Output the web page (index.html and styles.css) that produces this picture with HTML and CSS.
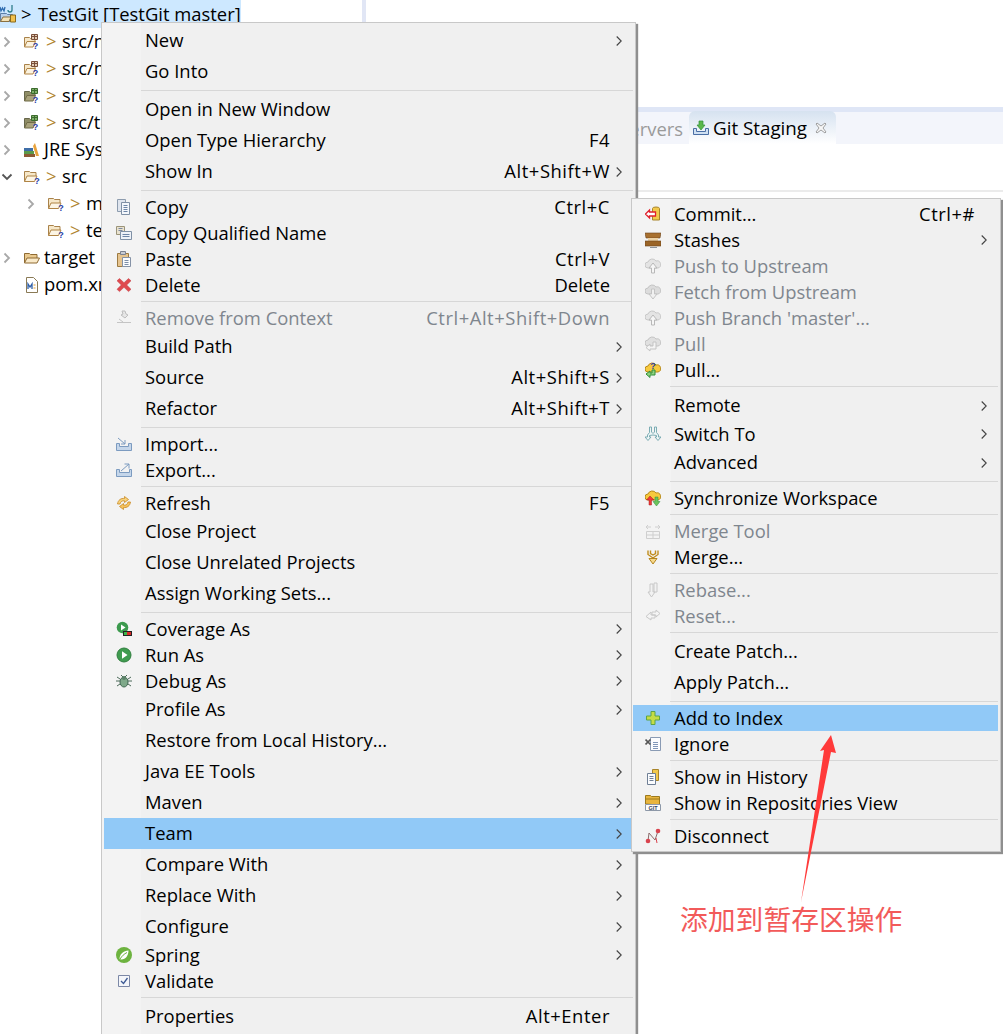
FILE: index.html
```html
<!DOCTYPE html>
<html lang="en">
<head>
<meta charset="utf-8">
<title>Eclipse Team menu</title>
<link rel="stylesheet" href="styles.css">
</head>
<body>
<svg class="sprite" width="0" height="0" aria-hidden="true">
  <defs>
    <symbol id="chev" viewBox="0 0 6 10"><path d="M.7.5 5.2 5 .7 9.5" fill="none" stroke="#444" stroke-width="1.1"/></symbol>
    <symbol id="tw-r" viewBox="0 0 8 12"><path d="M1.500 1.500 6 6l-4.500 4.500" fill="none" stroke="#a8a8a8" stroke-width="1.800"/></symbol>
    <symbol id="tw-d" viewBox="0 0 12 8"><path d="M1.500 1.500 6 6l4.500-4.500" fill="none" stroke="#555" stroke-width="1.800"/></symbol>

    <symbol id="pkgfolder" viewBox="0 0 16 16"><path d="M.5 13V3.500h5l1 1H11V8" fill="#f6e7c8" stroke="#a9824a"/><path d="M.5 13 3 7.500h8.500L9 13z" fill="#fbf3e0" stroke="#b08445"/><path d="M7.500.5h6v5h-6z" fill="#e2cdb4" stroke="#7a4f3a"/><path d="M7.500 2.500h6M10.500.5v5" stroke="#7a4f3a"/><text x="11.500" y="14.500" class="q">?</text></symbol>
    <symbol id="pkgfolder-g" viewBox="0 0 16 16"><path d="M.5 13V3.500h5l1 1H11V8" fill="#8f8d66" stroke="#66664a"/><path d="M.5 13 3 7.500h8.500L9 13z" fill="#a9a37c" stroke="#6f6a46"/><path d="M7.500.5h6v5h-6z" fill="#7fb069" stroke="#3c6b2e"/><path d="M7.500 2.500h6M10.500.5v5" stroke="#3c6b2e"/><text x="11.500" y="14.500" class="q">?</text></symbol>
    <symbol id="qfolder" viewBox="0 0 16 16"><path d="M.5 12.500v-10h5l1 1H12V7" fill="#f6e7c8" stroke="#a9824a"/><path d="M.5 12.500 3 7h10l-2.500 5.500z" fill="#fcf5e4" stroke="#b08445"/><text x="13" y="14.500" class="q">?</text></symbol>
    <symbol id="folder" viewBox="0 0 16 16"><path d="M.5 13V3.500h5l1 1H13V8" fill="#e9c98f" stroke="#8f6b33"/><path d="M.5 13 3 8h12.500L13 13z" fill="#f9e9c8" stroke="#8f6b33"/></symbol>
    <symbol id="libs" viewBox="0 0 16 16"><path d="M11 1l4 13h-3L9 4z" fill="#e8a33d"/><path d="M0 6h9v3H0z" fill="#3f6ea8"/><path d="M0 9h10v3H0z" fill="#5b9a4a"/><path d="M0 12h11v3H0z" fill="#8c5a34"/></symbol>
    <symbol id="xmlfile" viewBox="0 0 16 16"><path d="M2.500.5h7l4 4v11h-11z" fill="#fff" stroke="#8a7a55"/><path d="M4 12V7l2 3 2-3v5" fill="none" stroke="#2f5fa8" stroke-width="1.300"/><path d="M9.500 8h2M9.500 11h2" stroke="#e0a030"/></symbol>
    <symbol id="project" viewBox="0 0 17 18"><path d="M.5 8.500h6l1 1h5v7H.5z" fill="#b9d0ea" stroke="#5c7fa8"/><path d="M.5 16.500 3 12h8l-2 4.500z" fill="#f3e2b6" stroke="#8a7040"/><path d="M0 2l1 4 1.500-3L4 6l1-4" fill="none" stroke="#2e6cb0" stroke-width="1.300"/><path d="M12 0v5a2 2 0 0 1-4 0" fill="none" stroke="#2e7d8c" stroke-width="1.300"/><path d="M10.500 10h5v7h-5z" fill="#f2c14e" stroke="#8a6a1c"/></symbol>

    <symbol id="copy" viewBox="0 0 16 16"><path d="M1.500.5h8v12h-8z" fill="#dfe5ee" stroke="#8d9cae"/><path d="M5.500 3.500h8v12h-8z" fill="#f4f7fb" stroke="#7f90a5"/><path d="M7.500 6.500h4M7.500 8.500h4M7.500 10.500h4M7.500 12.500h4" stroke="#6d85a6"/></symbol>
    <symbol id="copyq" viewBox="0 0 16 16"><path d="M.5 1.500h8v8h-8z" fill="#e9e2cf" stroke="#9b9479"/><path d="M2.500 3.500h4M2.500 5.500h4" stroke="#7d8aa0"/><path d="M4.500 6.500h11v8h-11z" fill="#eef2f8" stroke="#7f90a5"/><path d="M6.500 9.500h7M6.500 11.500h7" stroke="#6d85a6"/></symbol>
    <symbol id="paste" viewBox="0 0 16 16"><path d="M1.500 2.500h11v13h-11z" fill="#e6c48f" stroke="#9c7a42"/><path d="M4.500.5h5v3h-5z" fill="#c8ccd4" stroke="#7d8290"/><path d="M6.500 6.500h8v9h-8z" fill="#fbfcfe" stroke="#8592a6"/><path d="M8.500 9.500h4M8.500 11.500h4M8.500 13.500h4" stroke="#7d8fa8"/></symbol>
    <symbol id="del" viewBox="0 0 16 16"><path d="M3.500 1.500 8 5.700l4.500-4.200 2.500 2.300L10.700 8l4.300 4.300-2.500 2.300L8 10.300l-4.500 4.300L1 12.300 5.300 8 1 3.800z" fill="#df4a4f" stroke="#c03a40" stroke-width=".5"/></symbol>
    <symbol id="remove" viewBox="0 0 16 16"><path d="M6 1h3l1 3 2 1-3 3-4-3 2-1z" fill="#e6e6e6" stroke="#bdbdbd"/><path d="M1 12.500h14" stroke="#c4c4c4"/><path d="M3 9l4 3" stroke="#c4c4c4"/></symbol>
    <symbol id="import" viewBox="0 0 16 16"><path d="M.5 7.500v7h15v-7h-3v3h-9v-3z" fill="#c5d6ea" stroke="#7c9bc0"/><path d="M2 2l7 6M9 4v4H5" fill="none" stroke="#7c9bc0"/></symbol>
    <symbol id="export" viewBox="0 0 16 16"><path d="M.5 7.500v7h15v-7h-2v3h-10v-3z" fill="#c5d6ea" stroke="#7c9bc0"/><path d="M5 9l8-7M8.500 2H13v4.500" fill="none" stroke="#7c9bc0"/></symbol>
    <symbol id="refresh" viewBox="0 0 16 16"><path d="M1.500 9C2 5 5 3 8.500 3.500V1.500l4 3-4 3V5.800C6 5.500 4.500 6.800 4 9z" fill="#f8d27a" stroke="#c98a24" stroke-width=".8"/><path d="M14.500 7c-.5 4-3.500 6-7 5.500v2l-4-3 4-3v1.700c2.500.3 4-1 4.500-3.200z" fill="#f6c35e" stroke="#c98a24" stroke-width=".8"/></symbol>
    <symbol id="coverage" viewBox="0 0 16 16"><circle cx="6.500" cy="6.500" r="5.800" fill="#3c9a4e"/><path d="M5 3.500 9.500 6.500 5 9.500z" fill="#fff"/><path d="M7 10h9v5H7z" fill="#222"/><path d="M11 11h4v3h-4z" fill="#d92a2a"/><path d="M8 11h3v3H8z" fill="#39b54a"/></symbol>
    <symbol id="run" viewBox="0 0 16 16"><circle cx="8" cy="8" r="7" fill="#3f9b4f" stroke="#2f7f3e"/><path d="M6 4.200 11.500 8 6 11.800z" fill="#fff"/></symbol>
    <symbol id="debug" viewBox="0 0 16 16"><path d="M1 4l3 2M15 4l-3 2M0 8h4M16 8h-4M1 13l3-2M15 13l-3-2M5 2l2 2M11 2L9 4" stroke="#4d6b5a" fill="none"/><ellipse cx="8" cy="9" rx="4" ry="5" fill="#7fa98a" stroke="#3f6650"/><circle cx="8" cy="5" r="2" fill="#5b8268"/></symbol>
    <symbol id="spring" viewBox="0 0 16 16"><circle cx="8" cy="8" r="8" fill="#6db33f"/><path d="M3.500 12c0-5 4-8 9-8.500 0 5-3 9-7 9-1 0-1.500-.2-2-.5z" fill="#fff"/><path d="M4 12c2-3 4-5 7-6.500" stroke="#6db33f" fill="none"/></symbol>
    <symbol id="check" viewBox="0 0 16 16"><path d="M2.500 2.500h11v11h-11z" fill="#f4f6fa" stroke="#7c88a6"/><path d="M5 8l2.500 2.500L11.500 5" fill="none" stroke="#3d5a94" stroke-width="1.300"/></symbol>

    <symbol id="commit" viewBox="0 0 16 16"><path d="M7.500 2.500a3.500 1.500 0 0 1 7 0V14h-7z" fill="#f2c94c" stroke="#a8842a"/><path d="M.5 8l4-4v2h6v4h-6v2z" fill="#fff" stroke="#e0202c" stroke-width="1.300"/></symbol>
    <symbol id="stash" viewBox="0 0 16 16"><path d="M0 1h16l-1 5H1z" fill="#a8702f" stroke="#6b451c" stroke-width=".6"/><path d="M3 6h10v3H3z" fill="#ecd2a6"/><path d="M0 9h16v5H0z" fill="#9a6427" stroke="#6b451c" stroke-width=".6"/><path d="M5 15.500h7" stroke="#8d949c"/></symbol>
    <symbol id="cloud-up" viewBox="0 0 16 16"><path d="M3 10a3 3 0 0 1 0-6 4.500 4.500 0 0 1 8-1 3.500 3.500 0 0 1 2 7z" fill="#e4e4e4" stroke="#c8c8c8"/><path d="M8 5l4 5h-2.500v5h-3v-5H4z" fill="#f6f6f6" stroke="#b8b8b8"/></symbol>
    <symbol id="cloud-down" viewBox="0 0 16 16"><path d="M3 10a3 3 0 0 1 0-6 4.500 4.500 0 0 1 8-1 3.500 3.500 0 0 1 2 7z" fill="#dcdcdc" stroke="#c4c4c4"/><path d="M8 15l-4-5h2.500V5h3v5H12z" fill="#f0f0f0" stroke="#c4c4c4"/></symbol>
    <symbol id="cloud-pull" viewBox="0 0 16 16"><path d="M3 10a3 3 0 0 1 0-6 4.500 4.500 0 0 1 8-1 3.500 3.500 0 0 1 2 7z" fill="#e0e0e0" stroke="#c4c4c4"/><path d="M8 6v4H5V8L1 11.500 5 15v-2h6V6z" fill="#f4f4f4" stroke="#c4c4c4"/></symbol>
    <symbol id="pull" viewBox="0 0 16 16"><path d="M3 10a3 3 0 0 1 0-6 4.500 4.500 0 0 1 8-1 3.500 3.500 0 0 1 2 7z" fill="#f7c93e" stroke="#b88a1a"/><path d="M7 8v3H5V9L1 12l4 3.500V13h5V8z" fill="#8fd07e" stroke="#2f8f3a"/><text x="8" y="7" class="q">?</text></symbol>
    <symbol id="switch" viewBox="0 0 16 16"><path d="M4.500 1h2v5l1.500 1.500L9.500 6V1h2v5.500l2 2.500v2H16l-3 3.500-3-3.500h1.500V9.500L8 9l-3.500.5V11H6l-3 3.500L0 11h2.500V9l2-2.500z" fill="#edf5f6" stroke="#6fa5ad" stroke-width=".9"/></symbol>
    <symbol id="sync" viewBox="0 0 16 16"><path d="M3 10a3 3 0 0 1 0-6 4.500 4.500 0 0 1 8-1 3.500 3.500 0 0 1 2 7z" fill="#f7c93e" stroke="#b88a1a"/><path d="M5 6L1.500 10H4v5h2.500v-5H9z" fill="#ef3a3a" stroke="#a81e1e" stroke-width=".5"/><path d="M11.500 16 15 11.500h-2V7h-3v4.500H8z" fill="#6cc35c" stroke="#2f8f3a" stroke-width=".5"/></symbol>
    <symbol id="mergetool" viewBox="0 0 16 16"><path d="M1.500 8.500h13v7h-13zM8 8.500v7M1.500 12h13" fill="#f3f3f3" stroke="#cfcfcf"/><path d="M2 4h4M1 4l2-2M1 4l2 2M14 4h-4M15 4l-2-2M15 4l-2 2" fill="none" stroke="#cfcfcf"/></symbol>
    <symbol id="merge" viewBox="0 0 16 16"><path d="M3 1.500v4L8 9l5-3.500v-4M5.500 1.500v3L8 6l2.500-1.500v-3" fill="none" stroke="#c08d1e" stroke-width="1.400"/><path d="M4 9.500h8l-4 5.500z" fill="#f6d88a" stroke="#b5851e"/></symbol>
    <symbol id="rebase" viewBox="0 0 16 16"><path d="M9 1v9h3V1zM5 2v8H3l3.500 5L10 10H8V2z" fill="#f2f2f2" stroke="#c8c8c8"/></symbol>
    <symbol id="reset" viewBox="0 0 16 16"><path d="M6 4 1 8.500 6 12v-2h4V7H6zM11 2v2H7v3h4v2l4-3.500z" fill="#f4f4f4" stroke="#c8c8c8"/></symbol>
    <symbol id="add" viewBox="0 0 16 16"><path d="M6 1.500h4V6h4.500v4H10v4.500H6V10H1.500V6H6z" fill="#c5dc46" stroke="#5fa445"/></symbol>
    <symbol id="ignore" viewBox="0 0 16 16"><path d="M5.500 1.500h10v13h-10z" fill="#fbfcfe" stroke="#8a9bb4"/><path d="M8 6.500h5M8 8.500h5M8 10.500h5M8 12.500h5" stroke="#7f95b8"/><path d="M.5 3.500l5 5M5.500 3.500l-5 5" stroke="#555" stroke-width="1.700"/></symbol>
    <symbol id="history" viewBox="0 0 16 16"><path d="M7.500.5h6v11h-6z" fill="#f2c94c" stroke="#a8842a"/><path d="M2.500 4.500h8v11h-8z" fill="#fbfcfe" stroke="#6f7f95"/><path d="M4.500 7.500h4M4.500 9.500h4M4.500 11.500h4" stroke="#6f7f95"/></symbol>
    <symbol id="repos" viewBox="0 0 16 16"><path d="M.5 9V.5h5l1 1h8V10z" fill="#e8b53e" stroke="#9c7a1e"/><path d="M1 4h14" stroke="#9c7a1e"/><path d="M.5 9.500h15v6H.5z" fill="#fdfdfd" stroke="#8d98a8"/><text x="8" y="14.500" class="git">GIT</text></symbol>
    <symbol id="disconnect" viewBox="0 0 16 16"><path d="M3 13l1-8 6 7 3-9" fill="none" stroke="#8c6a6a"/><circle cx="3" cy="13" r="2.300" fill="#d9434e"/><circle cx="13" cy="3" r="2.300" fill="#d9434e"/><path d="M12 15l-1-5" stroke="#d9434e"/></symbol>
    <symbol id="staging" viewBox="0 0 16 16"><path d="M.5 8.500v6h15v-6h-3v3h-9v-3z" fill="#cfe0f2" stroke="#4a6fa5"/><path d="M6 1h4v4h2L8 10 4 5h2z" fill="#5bb84a" stroke="#2f8f3a" stroke-width=".7"/></symbol>
    <symbol id="close" viewBox="0 0 12 12"><path d="M2 1l4 3 4-3 1 1-3 4 3 4-1 1-4-3-4 3-1-1 3-4-3-4z" fill="#f6f6f6" stroke="#8a8a8a" stroke-width=".8"/></symbol>
  </defs>
</svg>

<div class="workbench">
  <aside class="tree">
    <div class="node root"><svg class="proj"><use href="#project"/></svg><span class="deco">&gt;</span><span class="name">TestGit [TestGit master]</span></div>
    <div class="node"><svg class="tw"><use href="#tw-r"/></svg><svg class="ico"><use href="#pkgfolder"/></svg><span class="deco b">&gt;</span><span class="name">src/main</span></div>
    <div class="node"><svg class="tw"><use href="#tw-r"/></svg><svg class="ico"><use href="#pkgfolder"/></svg><span class="deco b">&gt;</span><span class="name">src/main</span></div>
    <div class="node"><svg class="tw"><use href="#tw-r"/></svg><svg class="ico"><use href="#pkgfolder-g"/></svg><span class="deco b">&gt;</span><span class="name">src/test</span></div>
    <div class="node"><svg class="tw"><use href="#tw-r"/></svg><svg class="ico"><use href="#pkgfolder-g"/></svg><span class="deco b">&gt;</span><span class="name">src/test</span></div>
    <div class="node"><svg class="tw"><use href="#tw-r"/></svg><svg class="ico"><use href="#libs"/></svg><span class="name plain">JRE System</span></div>
    <div class="node"><svg class="tw-open"><use href="#tw-d"/></svg><svg class="ico"><use href="#qfolder"/></svg><span class="deco b">&gt;</span><span class="name">src</span></div>
    <div class="node child"><svg class="tw"><use href="#tw-r"/></svg><svg class="ico"><use href="#qfolder"/></svg><span class="deco b">&gt;</span><span class="name">main</span></div>
    <div class="node child"><span class="tw"></span><svg class="ico"><use href="#qfolder"/></svg><span class="deco b">&gt;</span><span class="name">test</span></div>
    <div class="node"><svg class="tw"><use href="#tw-r"/></svg><svg class="ico"><use href="#folder"/></svg><span class="name plain">target</span></div>
    <div class="node"><span class="tw"></span><svg class="ico"><use href="#xmlfile"/></svg><span class="name plain">pom.xml</span></div>
  </aside>
  <div class="sash"></div>
  <main class="editor">
    <div class="tabband"></div>
    <div class="tabs">
      <span class="tab-off">Servers</span>
      <div class="tab-on"><svg class="tab-ico"><use href="#staging"/></svg><span>Git Staging</span><svg class="tab-x"><use href="#close"/></svg></div>
    </div>
    <div class="viewbody"></div>
    <div class="viewrule"></div>
  </main>
</div>

<nav class="menu main-menu">
  <div class="mi"><span class="gut"></span><span class="lbl">New</span><svg class="arr"><use href="#chev"/></svg></div>
  <div class="mi"><span class="gut"></span><span class="lbl">Go Into</span></div>
  <div class="sep"></div>
  <div class="mi"><span class="gut"></span><span class="lbl">Open in New Window</span></div>
  <div class="mi"><span class="gut"></span><span class="lbl">Open Type Hierarchy</span><span class="key">F4</span></div>
  <div class="mi"><span class="gut"></span><span class="lbl">Show In</span><span class="key">Alt+Shift+W</span><svg class="arr"><use href="#chev"/></svg></div>
  <div class="sep"></div>
  <div class="mi ic"><span class="gut"><svg><use href="#copy"/></svg></span><span class="lbl">Copy</span><span class="key">Ctrl+C</span></div>
  <div class="mi ic"><span class="gut"><svg><use href="#copyq"/></svg></span><span class="lbl">Copy Qualified Name</span></div>
  <div class="mi ic"><span class="gut"><svg><use href="#paste"/></svg></span><span class="lbl">Paste</span><span class="key">Ctrl+V</span></div>
  <div class="mi ic"><span class="gut"><svg><use href="#del"/></svg></span><span class="lbl">Delete</span><span class="key word">Delete</span></div>
  <div class="sep"></div>
  <div class="mi ic off"><span class="gut"><svg><use href="#remove"/></svg></span><span class="lbl">Remove from Context</span><span class="key">Ctrl+Alt+Shift+Down</span></div>
  <div class="mi"><span class="gut"></span><span class="lbl">Build Path</span><svg class="arr"><use href="#chev"/></svg></div>
  <div class="mi"><span class="gut"></span><span class="lbl">Source</span><span class="key">Alt+Shift+S</span><svg class="arr"><use href="#chev"/></svg></div>
  <div class="mi"><span class="gut"></span><span class="lbl">Refactor</span><span class="key">Alt+Shift+T</span><svg class="arr"><use href="#chev"/></svg></div>
  <div class="sep"></div>
  <div class="mi ic"><span class="gut"><svg><use href="#import"/></svg></span><span class="lbl">Import...</span></div>
  <div class="mi ic"><span class="gut"><svg><use href="#export"/></svg></span><span class="lbl">Export...</span></div>
  <div class="sep"></div>
  <div class="mi ic"><span class="gut"><svg><use href="#refresh"/></svg></span><span class="lbl">Refresh</span><span class="key">F5</span></div>
  <div class="mi"><span class="gut"></span><span class="lbl">Close Project</span></div>
  <div class="mi"><span class="gut"></span><span class="lbl">Close Unrelated Projects</span></div>
  <div class="mi"><span class="gut"></span><span class="lbl">Assign Working Sets...</span></div>
  <div class="sep"></div>
  <div class="mi ic"><span class="gut"><svg><use href="#coverage"/></svg></span><span class="lbl">Coverage As</span><svg class="arr"><use href="#chev"/></svg></div>
  <div class="mi ic"><span class="gut"><svg><use href="#run"/></svg></span><span class="lbl">Run As</span><svg class="arr"><use href="#chev"/></svg></div>
  <div class="mi ic"><span class="gut"><svg><use href="#debug"/></svg></span><span class="lbl">Debug As</span><svg class="arr"><use href="#chev"/></svg></div>
  <div class="mi"><span class="gut"></span><span class="lbl">Profile As</span><svg class="arr"><use href="#chev"/></svg></div>
  <div class="mi"><span class="gut"></span><span class="lbl">Restore from Local History...</span></div>
  <div class="mi"><span class="gut"></span><span class="lbl">Java EE Tools</span><svg class="arr"><use href="#chev"/></svg></div>
  <div class="mi"><span class="gut"></span><span class="lbl">Maven</span><svg class="arr"><use href="#chev"/></svg></div>
  <div class="mi hot"><span class="gut"></span><span class="lbl">Team</span><svg class="arr"><use href="#chev"/></svg></div>
  <div class="mi"><span class="gut"></span><span class="lbl">Compare With</span><svg class="arr"><use href="#chev"/></svg></div>
  <div class="mi"><span class="gut"></span><span class="lbl">Replace With</span><svg class="arr"><use href="#chev"/></svg></div>
  <div class="mi"><span class="gut"></span><span class="lbl">Configure</span><svg class="arr"><use href="#chev"/></svg></div>
  <div class="mi ic"><span class="gut"><svg><use href="#spring"/></svg></span><span class="lbl">Spring</span><svg class="arr"><use href="#chev"/></svg></div>
  <div class="mi ic"><span class="gut"><svg><use href="#check"/></svg></span><span class="lbl">Validate</span></div>
  <div class="sep"></div>
  <div class="mi"><span class="gut"></span><span class="lbl">Properties</span><span class="key">Alt+Enter</span></div>
</nav>

<nav class="menu team-menu">
  <div class="mi ic"><span class="gut"><svg><use href="#commit"/></svg></span><span class="lbl">Commit...</span><span class="key">Ctrl+#</span></div>
  <div class="mi ic"><span class="gut"><svg><use href="#stash"/></svg></span><span class="lbl">Stashes</span><svg class="arr"><use href="#chev"/></svg></div>
  <div class="mi ic off"><span class="gut"><svg><use href="#cloud-up"/></svg></span><span class="lbl">Push to Upstream</span></div>
  <div class="mi ic off"><span class="gut"><svg><use href="#cloud-down"/></svg></span><span class="lbl">Fetch from Upstream</span></div>
  <div class="mi ic off"><span class="gut"><svg><use href="#cloud-up"/></svg></span><span class="lbl">Push Branch 'master'...</span></div>
  <div class="mi ic off"><span class="gut"><svg><use href="#cloud-pull"/></svg></span><span class="lbl">Pull</span></div>
  <div class="mi ic"><span class="gut"><svg><use href="#pull"/></svg></span><span class="lbl">Pull...</span></div>
  <div class="sep"></div>
  <div class="mi"><span class="gut"></span><span class="lbl">Remote</span><svg class="arr"><use href="#chev"/></svg></div>
  <div class="mi ic"><span class="gut"><svg><use href="#switch"/></svg></span><span class="lbl">Switch To</span><svg class="arr"><use href="#chev"/></svg></div>
  <div class="mi"><span class="gut"></span><span class="lbl">Advanced</span><svg class="arr"><use href="#chev"/></svg></div>
  <div class="sep"></div>
  <div class="mi ic"><span class="gut"><svg><use href="#sync"/></svg></span><span class="lbl">Synchronize Workspace</span></div>
  <div class="sep"></div>
  <div class="mi ic off"><span class="gut"><svg><use href="#mergetool"/></svg></span><span class="lbl">Merge Tool</span></div>
  <div class="mi ic"><span class="gut"><svg><use href="#merge"/></svg></span><span class="lbl">Merge...</span></div>
  <div class="sep"></div>
  <div class="mi ic off"><span class="gut"><svg><use href="#rebase"/></svg></span><span class="lbl">Rebase...</span></div>
  <div class="mi ic off"><span class="gut"><svg><use href="#reset"/></svg></span><span class="lbl">Reset...</span></div>
  <div class="sep"></div>
  <div class="mi"><span class="gut"></span><span class="lbl">Create Patch...</span></div>
  <div class="mi"><span class="gut"></span><span class="lbl">Apply Patch...</span></div>
  <div class="sep"></div>
  <div class="mi ic hot"><span class="gut"><svg><use href="#add"/></svg></span><span class="lbl">Add to Index</span></div>
  <div class="mi ic"><span class="gut"><svg><use href="#ignore"/></svg></span><span class="lbl">Ignore</span></div>
  <div class="sep"></div>
  <div class="mi ic"><span class="gut"><svg><use href="#history"/></svg></span><span class="lbl">Show in History</span></div>
  <div class="mi ic"><span class="gut"><svg><use href="#repos"/></svg></span><span class="lbl">Show in Repositories View</span></div>
  <div class="sep"></div>
  <div class="mi ic"><span class="gut"><svg><use href="#disconnect"/></svg></span><span class="lbl">Disconnect</span></div>
</nav>

<svg class="callout-arrow" viewBox="0 0 1003 1034"><path d="M831 735 836 753 831 752 801 902 824 750 820 751z"/></svg>
<div class="callout-text">添加到暂存区操作</div>
</body>
</html>
```
FILE: styles.css
```css
* { box-sizing: border-box; }
html, body { margin: 0; height: 1034px; overflow: hidden; background: #fff; }
body { font-family: "Open Sans", "Noto Sans", sans-serif; font-size: 18.400px; color: #000; position: relative; }
.sprite { position: absolute; }
.q { font: 700 9px "Liberation Sans", sans-serif; fill: #2b3fa8; text-anchor: middle; }
.git { font: 700 5.500px "Liberation Sans", sans-serif; fill: #33465c; text-anchor: middle; }

.workbench { display: flex; height: 1034px; }
.tree { width: 362px; flex: none; overflow: hidden; }
.node { display: flex; align-items: center; height: 27px; white-space: nowrap; }
.node .name, .node .deco { padding-bottom: 2px; }
.root { width: 241px; height: 28px; background: #cde8ff; }
.proj { width: 17px; height: 18px; flex: none; }
.root .deco { margin-left: 4px; width: 12px; color: #000; }
.root .name { margin-left: 5px; }
.tw { width: 8px; height: 12px; margin-left: 3px; flex: none; }
.tw-open { width: 12px; height: 8px; margin-left: 1px; margin-right: -2px; flex: none; }
.ico { width: 16px; height: 16px; margin-left: 13px; flex: none; }
.child { padding-left: 24px; }
.deco { margin-left: 6px; width: 10px; flex: none; }
.deco.b { color: #b0852f; }
.name { margin-left: 6px; }
.name.plain { margin-left: 4px; }

.sash { width: 4px; flex: none; background: #e1e6f5; }
.editor { flex: 1; display: flex; flex-direction: column; padding-top: 107px; }
.tabband { height: 5px; background: #dfe6f6; }
.tabs { height: 32px; background: #f3f5fb; display: flex; align-items: stretch; padding-left: 246px; white-space: nowrap; }
.tab-off { color: #9a9a9a; width: 77px; line-height: 34px; text-align: right; padding-right: 6px; }
.tab-on { width: 147px; display: flex; align-items: center; border-radius: 6px 6px 0 0; background: linear-gradient(#d6e2f0, #fff); margin-top: -1px; padding-left: 4px; font-size: 18.800px; }
.tab-ico { width: 16px; height: 16px; margin-right: 4px; }
.tab-x { width: 12px; height: 12px; margin-left: 8px; }
.viewbody { height: 46px; }
.viewrule { height: 2px; background: #ebebeb; }

.menu { position: absolute; border: 1px solid #c8c8c8; background: linear-gradient(90deg, #f3f3f3 39px, #f0f0f0 39px); box-shadow: 2px 2px 1px #8f8f8f; }
.main-menu { left: 101px; top: 22px; width: 535px; padding: 2px; }
.team-menu { left: 631px; top: 198px; width: 370px; padding: 2px 2px 2px 1px; }
.mi { display: flex; align-items: center; height: 31px; white-space: nowrap; }
.mi.ic { height: 26px; }
.lbl, .key { padding-bottom: 2px; }
.mi.off { color: #7f868e; }
.mi.hot { background: #91c9f7; }
.gut { width: 41px; flex: none; display: flex; justify-content: center; padding-right: 1px; }
.gut svg { width: 16px; height: 16px; }
.lbl { flex: 1; }
.key { letter-spacing: .55px; }
.key.word { letter-spacing: 0; }
.arr { width: 6px; height: 10px; flex: none; margin-left: 6px; margin-right: 11px; }
.mi .key:last-child { margin-right: 23px; }
.mi:not(:has(.key)) .arr { margin-left: 0; }
.sep { height: 7px; margin-left: 37px; display: flex; align-items: center; }
.sep::before { content: ""; flex: 1; height: 1.500px; background: #d7d7d7; }

.callout-arrow { position: absolute; left: 0; top: 0; width: 1003px; height: 1034px; fill: #ff3a3a; pointer-events: none; }
.callout-text { position: absolute; left: 680px; top: 898px; font: 400 27.800px/40px "Noto Sans CJK SC", sans-serif; color: #f25a5a; white-space: nowrap; }
```
